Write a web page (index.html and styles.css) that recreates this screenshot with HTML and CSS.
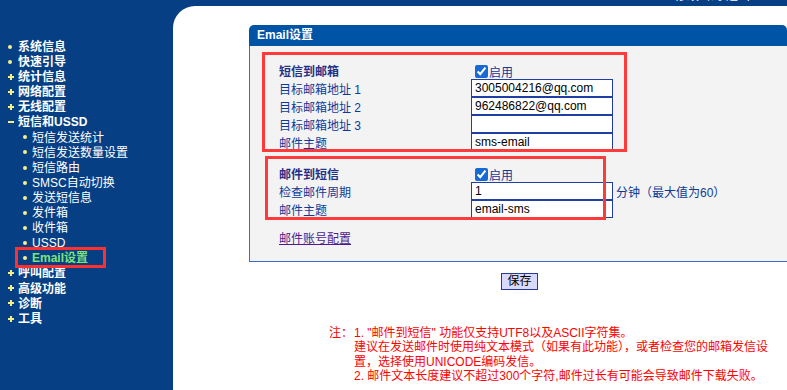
FILE: index.html
```html
<!DOCTYPE html>
<html>
<head>
<meta charset="utf-8">
<title>Email设置</title>
<link rel="stylesheet" href="styles.css">
</head>
<body>
<div class="top"><span>修改密码 退出</span></div>
<div class="wrap">
	<ul class="menu">
		<li class="dot">系统信息</li>
		<li class="dot">快速引导</li>
		<li class="plus">统计信息</li>
		<li class="plus">网络配置</li>
		<li class="plus">无线配置</li>
		<li class="minus">短信和USSD
			<ul class="sub">
				<li>短信发送统计</li>
				<li>短信发送数量设置</li>
				<li>短信路由</li>
				<li>SMSC自动切换</li>
				<li>发送短信息</li>
				<li>发件箱</li>
				<li>收件箱</li>
				<li>USSD</li>
				<li class="cur">Email设置</li>
			</ul>
		</li>
		<li class="plus">呼叫配置</li>
		<li class="plus">高级功能</li>
		<li class="plus">诊断</li>
		<li class="plus">工具</li>
	</ul>

	<div class="main">
		<div class="panel">
			<div class="panel-hd">Email设置</div>
			<div class="panel-bd">
				<div class="group g1">
					<div class="row"><b class="lb title">短信到邮箱</b><label class="chk"><input type="checkbox" checked />启用</label></div>
					<div class="row"><span class="lb">目标邮箱地址 1</span><input class="txt" type="text" value="3005004216@qq.com" /></div>
					<div class="row"><span class="lb">目标邮箱地址 2</span><input class="txt" type="text" value="962486822@qq.com" /></div>
					<div class="row"><span class="lb">目标邮箱地址 3</span><input class="txt" type="text" value="" /></div>
					<div class="row"><span class="lb">邮件主题</span><input class="txt" type="text" value="sms-email" /></div>
				</div>
				<div class="group g2">
					<div class="row"><b class="lb title">邮件到短信</b><label class="chk"><input type="checkbox" checked />启用</label></div>
					<div class="row"><span class="lb">检查邮件周期</span><input class="txt" type="text" value="1" /><span class="unit">分钟（最大值为60）</span></div>
					<div class="row"><span class="lb">邮件主题</span><input class="txt" type="text" value="email-sms" /></div>
				</div>
				<p class="more"><a href="#">邮件账号配置</a></p>
			</div>
		</div>
		<div class="btns"><button type="button">保存</button></div>
		<div class="note">
			<span class="hd">注：</span>
			<div class="bd">1. "邮件到短信" 功能仅支持UTF8以及ASCII字符集。<br />建议在发送邮件时使用纯文本模式（如果有此功能），或者检查您的邮箱发信设置，选择使用UNICODE编码发信。<br />2. 邮件文本长度建议不超过300个字符,邮件过长有可能会导致邮件下载失败。</div>
		</div>
	</div>
</div>
</body>
</html>
```

FILE: styles.css
```css
*{ margin:0; padding:0;}
body{ background:#073f85; font:12px "Liberation Sans","Noto Sans CJK SC",sans-serif; overflow:hidden;}
.top{ height:6px; overflow:hidden; text-align:right; padding-right:37px;}
.top span{ display:block; margin-top:-10px; line-height:12px; color:#fff;}
.wrap{ display:flex; min-height:384px;}

/* left menu */
.menu{ width:173px; flex:none; padding-top:34px; list-style:none; line-height:15.1px; color:#fff;}
.menu li{ list-style:none; white-space:nowrap;}
.menu > li{ font-weight:bold;}
.menu > li::before{ content:""; display:inline-block; vertical-align:middle; margin:-2px 4px 0 8px; width:6px; height:6px;}
.menu > li.dot::before{ width:4px; height:4px; margin:-2px 6px 0 8px; border-radius:2px; background:#f6f08a;}
.menu > li.plus::before{ background:linear-gradient(#f6ee86,#f6ee86) center/6px 2px no-repeat, linear-gradient(#f6ee86,#f6ee86) center/2px 6px no-repeat;}
.menu > li.minus::before{ background:linear-gradient(#f6ee86,#f6ee86) center/6px 2px no-repeat;}
.sub li{ font-weight:normal;}
.sub li::before{ content:""; display:inline-block; vertical-align:middle; margin:-2px 5px 0 23px; width:4px; height:4px; border-radius:2px; background:#f6f08a;}
.sub li.cur{ position:relative; color:#7ee27a; font-weight:bold;}
.sub li.cur::after{ content:""; position:absolute; left:15px; top:-4px; width:91px; height:21px; box-sizing:border-box; border:3px solid #ff3030;}

/* main */
.main{ flex:1; background:#fff; border-top-left-radius:22px; padding:19px 0 0 76px; min-width:0;}
.panel{ width:538px;}
.panel-hd{ height:21px; line-height:21px; padding-left:8px; background:#0054a6; color:#fff; font-weight:bold; border-radius:5px 5px 0 0;}
.panel-bd{ background:#f3f3f3; border-left:1px solid #3b6cc6; border-bottom:1px solid #3b6cc6; padding:6px 0 13px;}

.group{ position:relative; box-sizing:border-box; color:#0d3a98;}
.group::after{ content:""; position:absolute; left:0; top:0; right:0; bottom:0; border:3px solid #ff3a3a; pointer-events:none;}
.g1{ width:365px; margin-left:12px; padding:9px 0 1px 17px;}
.g2{ width:341px; margin:4px 0 0 15px; padding:8px 0 2px 14px;}
.row{ display:flex; align-items:center; height:18px; white-space:nowrap;}
.row .lb{ width:192px; flex:none;}
.row .title{ color:#262f86;}
.chk{ display:flex; align-items:center; padding-top:3px;}
.chk input{ width:13px; height:13px; margin:0 1px 0 4px; accent-color:#1769d4;}
.txt{ width:142px; height:18px; flex:none; box-sizing:border-box; border:1px solid #1f3fa5; background:#fff; padding:0 3px; font:12px "Liberation Sans","Noto Sans CJK SC",sans-serif; color:#000; outline:none;}
.unit{ margin-left:3px;}
.more{ margin:10px 0 0 29px; line-height:18px;}
.more a{ color:#4e1b8e; text-decoration:underline;}

.btns{ width:538px; padding:11px 0 0 3px; box-sizing:border-box; text-align:center; font-size:0;}
.btns button{ width:37px; height:17px; background:#d9d9fb; border:1px solid #24399b; font:12px "Liberation Sans","Noto Sans CJK SC",sans-serif; color:#000; line-height:15px;}

.note{ display:flex; margin:36px 0 0 80px; color:#f00; line-height:14.3px;}
.note .hd{ width:25px; flex:none;}
.note .bd{ width:425px;}
```
